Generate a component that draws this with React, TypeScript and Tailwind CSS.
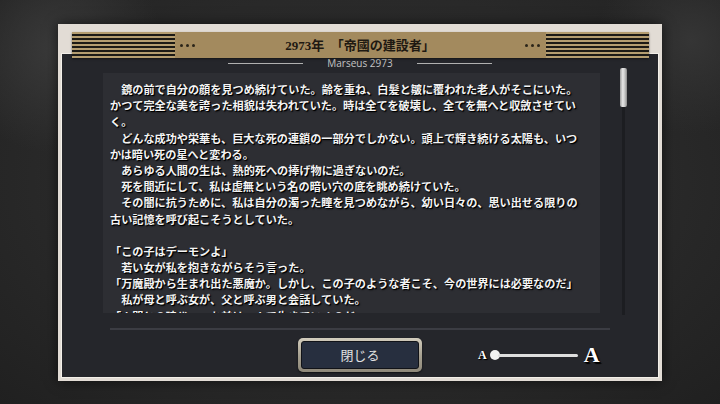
import React from "react";

const lines: string[] = [
  "　鏡の前で自分の顔を見つめ続けていた。齢を重ね、白髪と皺に覆われた老人がそこにいた。",
  "かつて完全な美を誇った相貌は失われていた。時は全てを破壊し、全てを無へと収斂させてい",
  "く。",
  "　どんな成功や栄華も、巨大な死の連鎖の一部分でしかない。頭上で輝き続ける太陽も、いつ",
  "かは暗い死の星へと変わる。",
  "　あらゆる人間の生は、熱的死への捧げ物に過ぎないのだ。",
  "　死を間近にして、私は虚無という名の暗い穴の底を眺め続けていた。",
  "　その闇に抗うために、私は自分の濁った瞳を見つめながら、幼い日々の、思い出せる限りの",
  "古い記憶を呼び起こそうとしていた。",
  "",
  "「この子はデーモンよ」",
  "　若い女が私を抱きながらそう言った。",
  "「万魔殿から生まれ出た悪魔か。しかし、この子のような者こそ、今の世界には必要なのだ」",
  "　私が母と呼ぶ女が、父と呼ぶ男と会話していた。",
  "「人間との時代……お前は一人で生きていくのだ」",
];

function Dots() {
  return (
    <div className="flex items-center gap-[3px]">
      <div className="w-[3px] h-[3px] rounded-full bg-[#2a2419]" />
      <div className="w-[3px] h-[3px] rounded-full bg-[#2a2419]" />
      <div className="w-[3px] h-[3px] rounded-full bg-[#2a2419]" />
    </div>
  );
}

function Stripes() {
  return (
    <div className="w-[103px] h-full bg-[repeating-linear-gradient(to_bottom,#b49d70_0px,#b49d70_2px,#1c1a16_2px,#1c1a16_4px)]" />
  );
}

export default function App() {
  return (
    <div className="w-[720px] h-[404px] overflow-hidden flex justify-center items-start pt-[24px] bg-[radial-gradient(circle_at_8%_12%,#3a3a3a_0%,transparent_14%),radial-gradient(circle_at_96%_10%,#353535_0%,transparent_12%),radial-gradient(ellipse_at_50%_45%,#2f2f2f_0%,#292929_60%,#202020_100%)]">
      <div className="w-[604px] h-[357px] bg-[#e2dcd5] flex flex-col px-[4px] pb-[4px] pt-[8px] shadow-[0_0_12px_rgba(0,0,0,0.6)]">
        {/* header */}
        <div className="relative z-10 ml-[10px] mr-[9px] h-[26px] bg-[#a38a5e] flex items-center shadow-[0_1px_2px_rgba(0,0,0,0.5)]">
          <Stripes />
          <div className="ml-[5px]">
            <Dots />
          </div>
          <div className="flex-1 text-center text-[13px] font-bold text-[#1e1912] font-['Liberation_Serif','Noto_Sans_CJK_JP',serif] leading-none">
            2973年　「帝國の建設者」
          </div>
          <div className="mr-[6px]">
            <Dots />
          </div>
          <Stripes />
        </div>

        {/* dark panel */}
        <div className="-mt-[4px] flex-1 bg-[#25262b] outline-1 outline-[#f3efe9] flex flex-col pt-[4px] pb-[5px]">
          {/* Marseus row */}
          <div className="h-[10px] flex items-center justify-center">
            <div className="w-[75px] h-px bg-[#b0b0b0]" />
            <div className="mx-[24px] text-[10px] leading-none text-[#c4c4c4] font-['Open_Sans',sans-serif]">
              Marseus 2973
            </div>
            <div className="w-[75px] h-px bg-[#b0b0b0]" />
          </div>

          {/* main row */}
          <div className="h-[247px] flex">
            <div className="ml-[41px] mt-[5px] w-[497px] h-[240px] bg-[#2d2e33] overflow-hidden pl-[7px] pt-[8px]">
              {lines.map((l, i) => (
                <div
                  key={i}
                  className="h-[16.2px] leading-[16.2px] whitespace-pre text-[11.15px] font-bold text-[#f4f4f4] font-['Noto_Sans_CJK_JP',sans-serif] [text-shadow:1px_1px_0_#000,1px_1px_2px_#000]"
                >
                  {l || " "}
                </div>
              ))}
            </div>
            <div className="ml-[20px] w-[7px] flex flex-col">
              <div className="h-[39px] w-[7px] rounded-[2px] bg-[linear-gradient(to_right,#9a9a9a,#e8e8e8_40%,#c4c4c4_70%,#8a8a8a)]" />
              <div className="flex-1 w-[3px] mx-auto bg-[#1c1d21]" />
            </div>
          </div>

          {/* separator */}
          <div className="mt-[13px] ml-[48px] w-[500px] h-[2px] bg-[#3b3c43]" />

          {/* bottom row */}
          <div className="mt-[8px] h-[34px] flex items-center">
            <div className="w-[236px]" />
            <div className="w-[124px] h-[34px] rounded-[5px] p-[3px] bg-[linear-gradient(to_bottom,#d3cdbd,#a8a292_50%,#8e8879)] shadow-[0_1px_2px_rgba(0,0,0,0.6)]">
              <div className="w-full h-full rounded-[3px] border border-[#111318] bg-[#272f3f] flex items-center justify-center text-[13px] text-[#e2e2e2] font-['Noto_Sans_CJK_JP',sans-serif]">
                閉じる
              </div>
            </div>
            <div className="w-[56px]" />
            <div className="flex items-center">
              <div className="text-[12px] font-bold text-white leading-none font-['Liberation_Serif',serif] [text-shadow:1px_1px_0_#000,1px_1px_1px_#000]">
                A
              </div>
              <div className="ml-[3px] w-[10px] h-[10px] rounded-full bg-[#f2f2f2]" />
              <div className="-ml-[2px] w-[80px] h-[3px] rounded-full bg-[#dedede]" />
              <div className="ml-[6px] text-[22px] font-bold text-white leading-none font-['Liberation_Serif',serif] [text-shadow:1px_1px_0_#000,2px_2px_1px_#000]">
                A
              </div>
            </div>
          </div>
        </div>
      </div>
    </div>
  );
}
